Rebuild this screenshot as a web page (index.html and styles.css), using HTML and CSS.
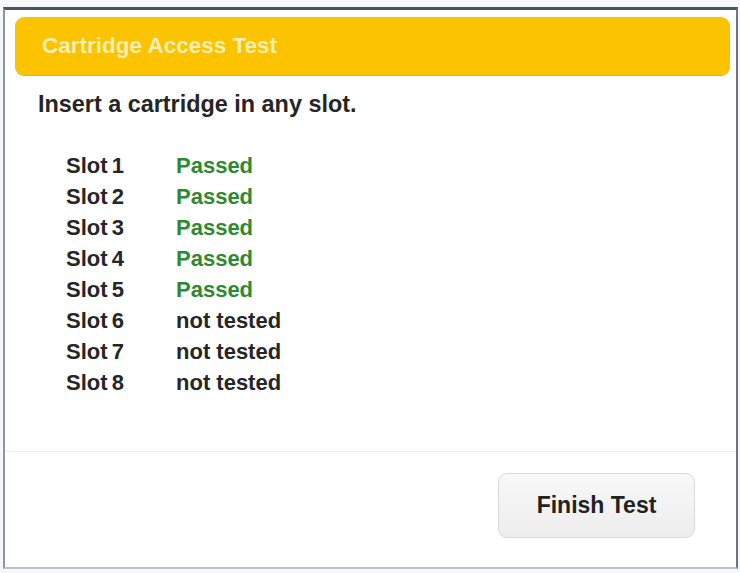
FILE: index.html
```html
<!DOCTYPE html>
<html>
<head>
<meta charset="utf-8">
<link rel="stylesheet" href="styles.css">
</head>
<body>
<div class="frame">
  <div class="header">Cartridge Access Test</div>
  <div class="instruction">Insert a cartridge in any slot.</div>
  <div class="slots">
    <span class="slot">Slot 1</span><span class="status passed">Passed</span>
    <span class="slot">Slot 2</span><span class="status passed">Passed</span>
    <span class="slot">Slot 3</span><span class="status passed">Passed</span>
    <span class="slot">Slot 4</span><span class="status passed">Passed</span>
    <span class="slot">Slot 5</span><span class="status passed">Passed</span>
    <span class="slot">Slot 6</span><span class="status">not tested</span>
    <span class="slot">Slot 7</span><span class="status">not tested</span>
    <span class="slot">Slot 8</span><span class="status">not tested</span>
  </div>
  <div class="footer">
    <button class="finish">Finish Test</button>
  </div>
</div>
</body>
</html>
```
FILE: styles.css
```css
html, body {
  margin: 0;
  padding: 0;
  background: #f5f7f9;
  width: 740px;
  height: 573px;
  overflow: hidden;
  font-family: "Liberation Sans", Arial, sans-serif;
}

.frame {
  box-sizing: border-box;
  margin: 7px 2px 0 3px;
  height: 562px;
  background: #ffffff;
  border-top: 3px solid #4b5562;
  border-left: 2px solid #8a97a5;
  border-right: 2px solid #6c7682;
  border-bottom: 2px solid #b8c4d1;
  display: flex;
  flex-direction: column;
}

.header {
  box-sizing: border-box;
  margin: 7px 6px 0 10px;
  height: 59px;
  background: #fcc300;
  border-bottom: 1px solid #e9b600;
  border-radius: 9px;
  color: #f6eeb2;
  font-weight: bold;
  font-size: 22.5px;
  line-height: 58px;
  padding-left: 27px;
}

.instruction {
  margin-top: 14px;
  padding-left: 33px;
  font-weight: bold;
  font-size: 23.4px;
  line-height: 28px;
  color: #252525;
}

.slots {
  margin-top: 32px;
  padding-left: 61px;
  display: grid;
  grid-template-columns: 110px auto;
  grid-auto-rows: 31px;
  font-weight: bold;
  font-size: 22px;
  line-height: 31px;
  color: #262626;
}

.slot {
  word-spacing: -2px;
}

.passed {
  color: #2f8a2f;
}

.footer {
  margin-top: auto;
  height: 116px;
  box-sizing: border-box;
  border-top: 1px solid #eeeeee;
  padding: 21px 41px 29px 0;
  display: flex;
  justify-content: flex-end;
  align-items: flex-start;
}

.finish {
  width: 197px;
  height: 65px;
  border: 1px solid #d9d9d9;
  border-radius: 9px;
  background: linear-gradient(#f8f8f8, #ededed);
  font-family: "Liberation Sans", Arial, sans-serif;
  font-weight: bold;
  font-size: 23px;
  color: #222222;
  padding: 0;
}
```
